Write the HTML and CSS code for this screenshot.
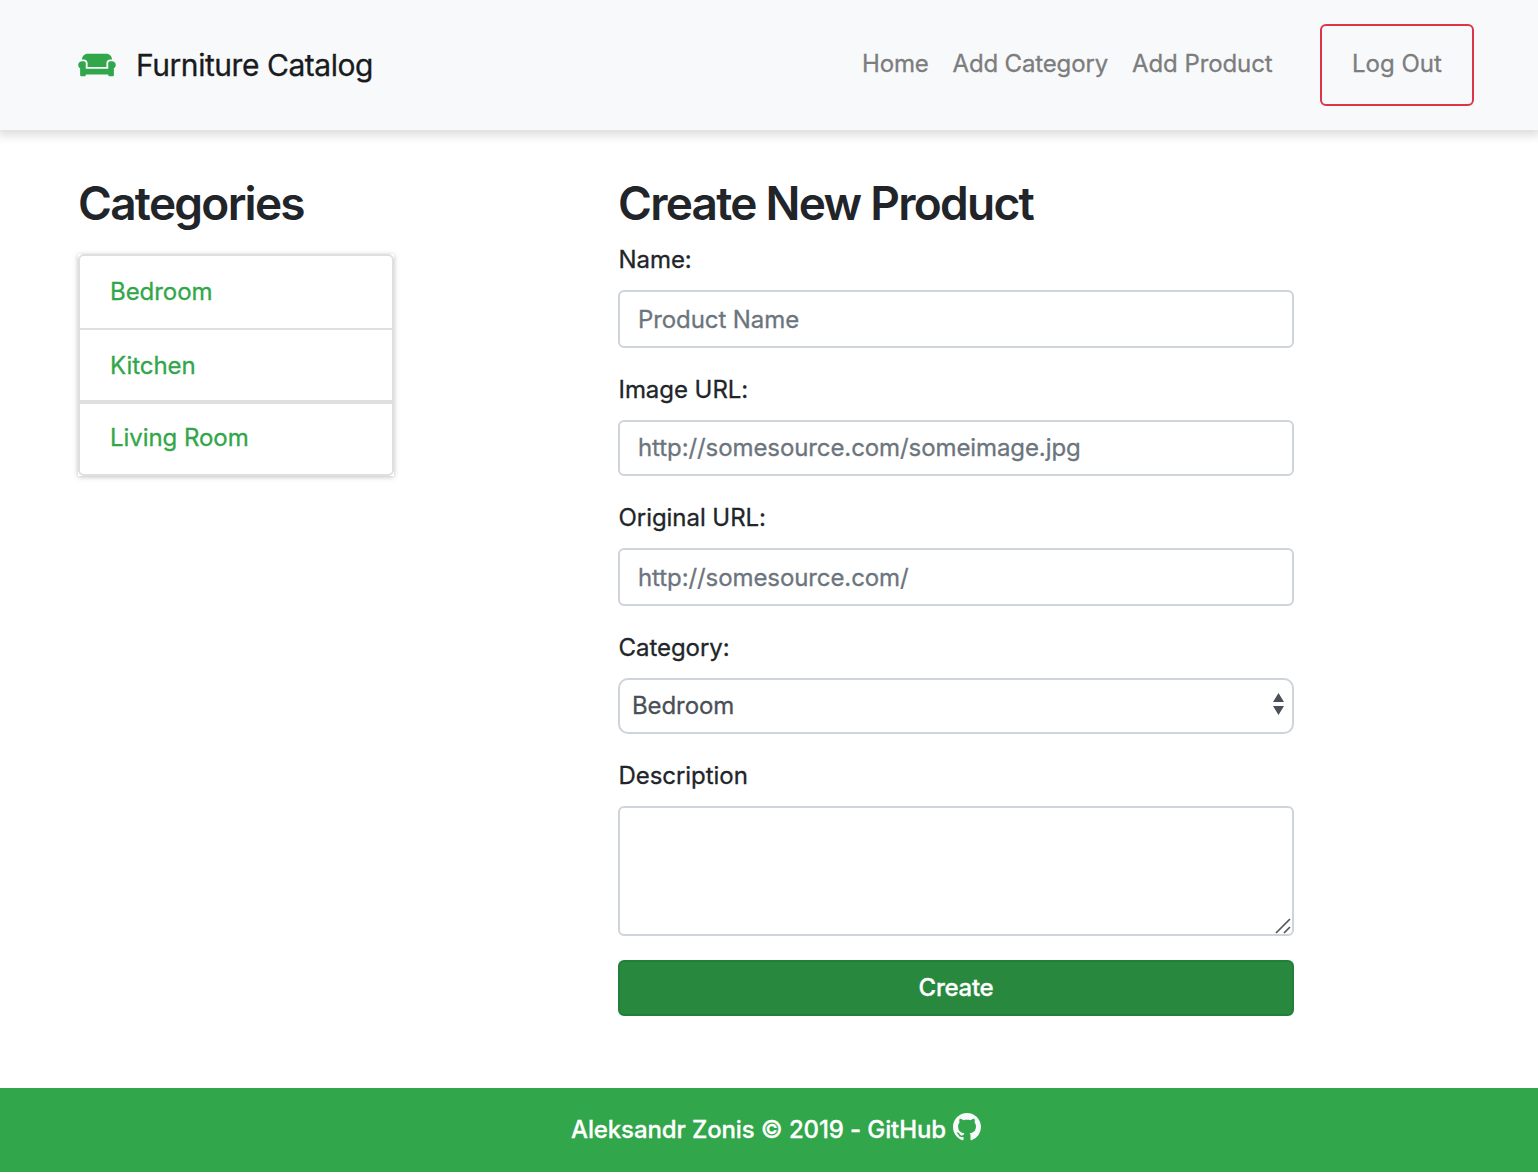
FILE: index.html
```html
<!DOCTYPE html>
<html lang="en">
<head>
<meta charset="utf-8">
<title>Furniture Catalog</title>
<link rel="stylesheet" href="styles.css">
</head>
<body>
<header class="navbar">
  <a class="brand">
    <svg class="brand-icon" viewBox="0 0 640 512"><path fill="currentColor" d="M160 224v64h320v-64c0-35.3 28.7-64 64-64h32c0-53-43-96-96-96H160c-53 0-96 43-96 96h32c35.3 0 64 28.7 64 64zm416-32h-32c-17.7 0-32 14.3-32 32v96H128v-96c0-17.7-14.3-32-32-32H64c-35.3 0-64 28.7-64 64 0 23.6 13 44 32 55.1V432c0 8.8 7.2 16 16 16h64c8.8 0 16-7.2 16-16v-16h384v16c0 8.8 7.2 16 16 16h64c8.8 0 16-7.2 16-16V311.1c19-11.1 32-31.5 32-55.1 0-35.3-28.7-64-64-64z"/></svg>
    <span class="brand-name">Furniture Catalog</span>
  </a>
  <nav class="nav">
    <a class="nav-link home">Home</a>
    <a class="nav-link add-category">Add Category</a>
    <a class="nav-link add-product">Add Product</a>
    <a class="nav-link logout">Log Out</a>
  </nav>
</header>
<main class="content">
  <aside class="sidebar">
    <h2 class="title">Categories</h2>
    <div class="list">
      <a class="item bedroom">Bedroom</a>
      <a class="item kitchen">Kitchen</a>
      <a class="item living">Living Room</a>
    </div>
  </aside>
  <form class="form">
    <h2 class="title create-title">Create New Product</h2>
    <div class="group tall">
      <label class="label" for="name">Name:</label>
      <input class="control" id="name" placeholder="Product Name">
    </div>
    <div class="group">
      <label class="label" for="image">Image URL:</label>
      <input class="control" id="image" placeholder="http://somesource.com/someimage.jpg">
    </div>
    <div class="group tall">
      <label class="label" for="original">Original URL:</label>
      <input class="control" id="original" placeholder="http://somesource.com/">
    </div>
    <div class="group">
      <label class="label" for="category">Category:</label>
      <div class="select-wrap">
        <select class="control select" id="category"><option>Bedroom</option></select>
        <svg class="select-arrows" viewBox="0 0 11 22"><path fill="#495057" d="M5.5 0L11 9H0zM0 13h11L5.5 22z"/></svg>
      </div>
    </div>
    <div class="group">
      <label class="label" for="description">Description</label>
      <div class="area-wrap">
        <textarea class="control area" id="description"></textarea>
        <svg class="grip" viewBox="0 0 16 16"><path d="M1 15L15 1M9 15L15 9" fill="none" stroke="#555" stroke-width="1.7"/></svg>
      </div>
    </div>
    <button class="submit" type="button">Create</button>
  </form>
</main>
<footer class="footer">
  <span class="credit">Aleksandr Zonis © 2019 - GitHub</span>
  <svg class="github" viewBox="0 0 16 16"><path fill="#f8f9fa" d="M8 0C3.58 0 0 3.58 0 8c0 3.54 2.29 6.53 5.47 7.59.4.07.55-.17.55-.38 0-.19-.01-.82-.01-1.49-2.01.37-2.53-.49-2.69-.94-.09-.23-.48-.94-.82-1.13-.28-.15-.68-.52-.01-.53.63-.01 1.08.58 1.23.82.72 1.21 1.87.87 2.33.66.07-.52.28-.87.51-1.07-1.78-.2-3.64-.89-3.64-3.95 0-.87.31-1.59.82-2.15-.08-.2-.36-1.02.08-2.12 0 0 .67-.21 2.2.82.64-.18 1.32-.27 2-.27s1.36.09 2 .27c1.53-1.04 2.2-.82 2.2-.82.44 1.1.16 1.92.08 2.12.51.56.82 1.27.82 2.15 0 3.07-1.87 3.75-3.65 3.95.29.25.54.73.54 1.48 0 1.07-.01 1.93-.01 2.2 0 .21.15.46.55.38A8.013 8.013 0 0 0 16 8c0-4.42-3.58-8-8-8z"/></svg>
</footer>
</body>
</html>
```
FILE: styles.css
```css
* { box-sizing: border-box; }
body {
  margin: 0;
  background: #fff;
  color: #212529;
  font-family: Inter, "Liberation Sans", sans-serif;
  font-size: 24px;
  letter-spacing: -.05px;
  line-height: 36px;
  -webkit-text-stroke: .3px;
}
.navbar {
  display: flex;
  justify-content: space-between;
  align-items: flex-start;
  height: 130px;
  padding: 24px 64px 24px 78px;
  background: #f8f9fb;
  box-shadow: 0 2px 10px 3px rgba(0, 0, 0, .15);
}
.brand { display: flex; padding-top: 23px; color: #191b1c; }
.brand-icon { width: 38px; height: 30px; margin: 3px 20px 0 0; color: #31a64a; }
.brand-name { font-size: 30px; letter-spacing: -.45px; }
.nav { display: flex; color: #7c7d7d; letter-spacing: -.15px; }
.nav-link { padding-top: 22px; white-space: nowrap; }
.home { width: 90.5px; }
.add-category { width: 179.5px; }
.add-product { width: 188px; letter-spacing: -.08px; }
.logout {
  width: 154px;
  height: 82px;
  padding: 20px 0 0 30px;
  border: 2px solid #dc3549;
  border-radius: 6px;
  letter-spacing: 0;
}
.content { display: flex; height: 958px; padding: 44px 0 0 78px; }
.sidebar { width: 316px; margin-right: 224px; }
.title {
  margin: 0;
  font-size: 46px;
  font-weight: 600;
  letter-spacing: -1.74px;
  line-height: 58px;
  white-space: nowrap;
  -webkit-text-stroke: 0;
}
.list {
  height: 222px;
  margin-top: 22px;
  box-shadow: 0 1px 5px rgba(0, 0, 0, .25);
  background: #fff;
}
.item {
  display: block;
  height: 76px;
  padding: 18px 30px 0;
  border: 2px solid #dfdfdf;
  color: #31a64a;
}
.bedroom { border-radius: 6px 6px 0 0; }
.kitchen { height: 72px; margin-top: -2px; border-bottom: 0; }
.living { border-top-width: 4px; border-radius: 0 0 6px 6px; padding-top: 16px; }
.form { width: 676px; }
.group { height: 128px; }
.group.tall { height: 130px; }
.create-title { height: 58px; margin-bottom: 10px; }
.label { display: block; height: 48px; padding-left: .5px; }
.control {
  display: block;
  width: 100%;
  height: 56px;
  margin: 0;
  padding: 0 18px 2px;
  border: 2px solid #ced4da;
  border-radius: 6px;
  background: #fff;
  color: #495057;
  font: inherit;
  letter-spacing: -.09px;
}
.tall .control { height: 58px; padding-bottom: 0; }
.control::placeholder { color: #6c757d; opacity: 1; }
.select-wrap, .area-wrap { position: relative; }
.select { appearance: none; padding: 0 12px; border-radius: 10px; }
.select-arrows { position: absolute; right: 10px; top: 15px; width: 11px; height: 22px; }
.area { height: 130px; resize: none; }
.grip { position: absolute; right: 3px; bottom: 2px; width: 16px; height: 16px; }
.submit {
  display: block;
  width: 100%;
  height: 56px;
  margin-top: 74px;
  padding: 0;
  border: 2px solid #227f37;
  border-radius: 6px;
  background: #28893e;
  color: #fff;
  font: inherit;
  font-weight: 500;
  letter-spacing: -.25px;
}
.footer {
  display: flex;
  height: 84px;
  padding: 24px 0 0 571px;
  background: #31a64a;
  color: #fff;
  font-weight: 500;
  letter-spacing: -.12px;
}
.credit { width: 382px; white-space: nowrap; }
.github { width: 28px; height: 28px; margin-top: 1px; }
```
